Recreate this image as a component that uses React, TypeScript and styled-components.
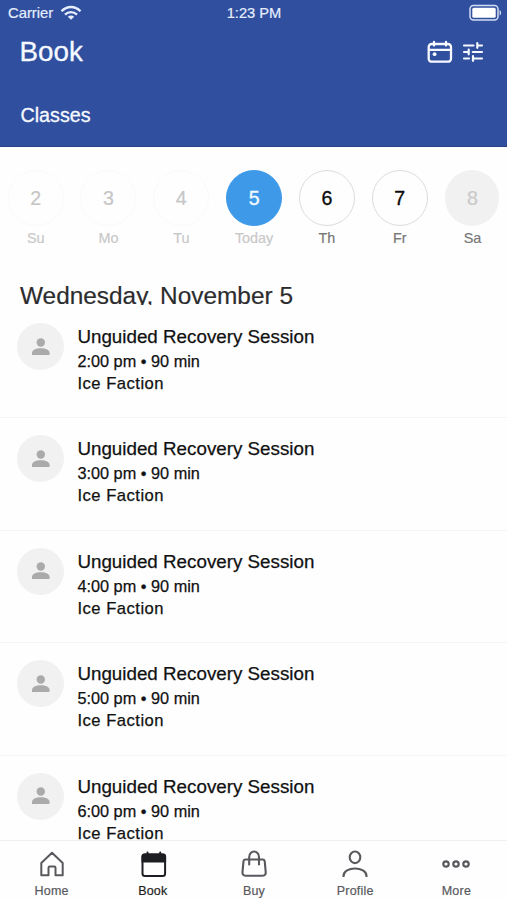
import React from 'react';
import styled, { createGlobalStyle } from 'styled-components';

const GlobalStyle = createGlobalStyle`
  * { box-sizing: border-box; }
  body { margin: 0; background: #fff; }
`;

const Screen = styled.div`
  display: flex;
  flex-direction: column;
  width: 507px;
  height: 900px;
  overflow: hidden;
  background: #fefefe;
  font-family: 'Liberation Sans', Arial, sans-serif;
`;

const Header = styled.header`
  flex: none;
  height: 147px;
  background: #304f9f;
  border-bottom: 1px solid #2c4289;
  color: #f6f9ff;
`;

const StatusBar = styled.div`
  display: grid;
  grid-template-columns: 1fr auto 1fr;
  align-items: center;
  height: 24px;
  padding: 0 5px 0 8px;
  font-size: 14.8px;
  line-height: 24px;
  color: #e6eefd;
  -webkit-text-stroke: 0.2px;
`;

const Carrier = styled.div`
  display: flex;
  align-items: center;
  gap: 7px;
  padding-top: 1px;
`;

const Clock = styled.div`
  font-size: 14.7px;
  line-height: 24px;
  height: 24px;
  margin-right: 2px;
`;

const BatterySlot = styled.div`
  display: flex;
  justify-content: flex-end;
`;

const TitleRow = styled.div`
  display: flex;
  align-items: center;
  justify-content: space-between;
  height: 56px;
  padding: 0 23px 0 19.5px;
`;

const PageTitle = styled.h1`
  margin: 0;
  font-size: 27.8px;
  font-weight: 400;
  line-height: 56px;
  -webkit-text-stroke: 0.3px;
`;

const Actions = styled.div`
  display: flex;
  align-items: center;
  gap: 9px;
`;

const Tab = styled.div`
  padding: 23px 0 0 20.5px;
  font-size: 19.7px;
  line-height: 24px;
  -webkit-text-stroke: 0.3px;
`;

const WeekStrip = styled.div`
  flex: none;
  display: flex;
  gap: 16.8px;
  height: 123px;
  padding: 23px 0 0 7.7px;
`;

const Day = styled.div`
  flex: none;
  display: flex;
  flex-direction: column;
  align-items: center;
  width: 56px;
`;

type DayKind = 'past' | 'today' | 'open' | 'closed';

const circleColors = {
  past: { bg: '#fefefe', line: '#fafafa', text: '#c6c6c6', label: '#c8c8c8' },
  today: { bg: '#3e9ae8', line: '#3e9ae8', text: '#eef8ff', label: '#c8c8c8' },
  open: { bg: '#fefefe', line: '#dcdcdc', text: '#0c0c0c', label: '#777' },
  closed: { bg: '#f1f1f1', line: '#f1f1f1', text: '#cacaca', label: '#777' },
};

const DayCircle = styled.div<{ $kind: DayKind }>`
  width: ${(p) => (p.$kind === 'closed' ? 54 : 56)}px;
  height: 56px;
  border-radius: 50%;
  border: 1px solid ${(p) => circleColors[p.$kind].line};
  background: ${(p) => circleColors[p.$kind].bg};
  color: ${(p) => circleColors[p.$kind].text};
  -webkit-text-stroke: ${(p) => (p.$kind === 'open' || p.$kind === 'today' ? 0.35 : 0.2)}px;
  font-size: 19.6px;
  line-height: 55px;
  text-align: center;
`;

const DayLabel = styled.div<{ $kind: DayKind }>`
  margin-top: 4px;
  font-size: 14.4px;
  line-height: 17px;
  -webkit-text-stroke: 0.2px;
  color: ${(p) => circleColors[p.$kind].label};
`;

const DateHeading = styled.h2`
  flex: none;
  height: 35px;
  margin: 0 0 1px;
  padding: 12px 0 0 20px;
  overflow: hidden;
  font-size: 24.4px;
  font-weight: 400;
  line-height: 28px;
  color: #2c2c2e;
  -webkit-text-stroke: 0.2px;
`;

const SessionList = styled.main`
  flex: 1;
  min-height: 0;
  overflow: hidden;
`;

const SessionRow = styled.article`
  display: flex;
  gap: 14px;
  height: 112.4px;
  padding: 17px 0 0 17px;
  border-bottom: 1px solid #f4f4f4;
`;

const Avatar = styled.div`
  display: flex;
  align-items: center;
  justify-content: center;
  width: 47px;
  height: 47px;
  border-radius: 50%;
  background: #f1f1f1;
`;

const SessionInfo = styled.div`
  margin-left: -0.6px;
  color: #111;
  -webkit-text-stroke: 0.25px;
`;

const SessionName = styled.div`
  padding-top: 3px;
  font-size: 18.8px;
  line-height: 22px;
`;

const SessionTime = styled.div`
  margin-top: 2px;
  font-size: 16.3px;
  line-height: 22px;
`;

const SessionPlace = styled.div`
  font-size: 16.6px;
  line-height: 23px;
  letter-spacing: 0.5px;
`;

const NavBar = styled.nav`
  flex: none;
  display: grid;
  grid-template-columns: repeat(5, 1fr);
  height: 60px;
  padding-left: 1px;
  border-top: 1px solid #f1f1f1;
  background: #fefefe;
`;

const NavItem = styled.div<{ $active: boolean }>`
  display: flex;
  flex-direction: column;
  align-items: center;
  padding-top: 8px;
  color: ${(p) => (p.$active ? '#1d1e22' : '#58595d')};
`;

const NavLabel = styled.div`
  margin-top: 4px;
  font-size: 12.5px;
  line-height: 17px;
  letter-spacing: 0.2px;
  -webkit-text-stroke: 0.2px;
`;

const WifiIcon = () => (
  <svg width="22" height="16" viewBox="0 0 22 16" fill="none" stroke="currentColor" strokeWidth="2.3">
    <path d="M1.5 6.2C7 .6 15 .6 20.500 6.2" />
    <path d="M5 9.600C8.500 6.200 13.500 6.200 17 9.600" />
    <path d="M11 14.800L7.800 11.700C9.600 10.100 12.400 10.100 14.200 11.700Z" fill="currentColor" stroke="none" />
  </svg>
);

const BatteryIcon = () => (
  <svg width="33" height="17" viewBox="0 0 33 17" fill="none">
    <rect x="1" y="1.500" width="28" height="14.500" rx="3.500" stroke="#d3def5" strokeWidth="1.500" />
    <rect x="3.300" y="3.700" width="23.400" height="10.100" rx="1.500" fill="#fff" />
    <path d="M30.600 6c2 .8 2 4.700 0 5.500z" fill="#d3def5" />
  </svg>
);

const ScheduleIcon = () => (
  <svg width="26" height="24" viewBox="0 0 26 24" fill="none" stroke="currentColor" strokeWidth="2.300" strokeLinecap="round">
    <rect x="1.700" y="4" width="22.300" height="17.700" rx="3" />
    <path d="M2 9.800h22M7 2v3.600M19 2v3.600" />
    <circle cx="7.600" cy="14.200" r="1.900" fill="currentColor" stroke="none" />
  </svg>
);

const FilterIcon = () => (
  <svg width="22" height="22" viewBox="0 0 22 22" fill="none" stroke="currentColor" strokeWidth="2.200" strokeLinecap="round">
    <path d="M2 4.500h9.500M15.300 4.500h4.700M15.300 2.200v4.600" />
    <path d="M2 11h4.500M6.700 8.700v4.600M10.800 11H20" />
    <path d="M2 17.500h5M11 17.500h9M11 15.200v4.600" />
  </svg>
);

const PersonIcon = () => (
  <svg width="20" height="20" viewBox="0 0 20 20" fill="#aaa">
    <circle cx="9.800" cy="5.500" r="4.200" />
    <path d="M1 18v-2.100c0-2.800 3.800-4.700 8.800-4.700s8.800 1.900 8.800 4.700V17q0 1-1 1z" />
  </svg>
);

const HomeIcon = () => (
  <svg width="30" height="30" viewBox="0 0 30 30" fill="none" stroke="currentColor" strokeWidth="2" strokeLinejoin="round">
    <path d="M4.300 14L15 3.800l10.700 10.200v12.200h-7.200v-7.400q0-1.200-1.200-1.200h-4.600q-1.200 0-1.200 1.200v7.400H4.300z" />
  </svg>
);

const BookIcon = () => (
  <svg width="30" height="30" viewBox="0 0 30 30" fill="none" stroke="currentColor" strokeWidth="2" strokeLinecap="round">
    <rect x="4.500" y="5.500" width="22.600" height="21.500" rx="2.500" />
    <path d="M4.500 12.500V7.500q0-2 2-2h18.600q2 0 2 2v5zM9.500 3.500v3M22.200 3.500v3" fill="currentColor" />
  </svg>
);

const BagIcon = () => (
  <svg width="30" height="30" viewBox="0 0 30 30" fill="none" stroke="currentColor" strokeWidth="2.100" strokeLinecap="round">
    <path d="M6.500 10.500h17.200q1.700 0 2 1.600l1 10.700q.3 3.900-3 3.900H6.500q-3.300 0-3-3.900l1-10.700q.3-1.600 2-1.600z" />
    <path d="M10.200 15.500V8C10.200.7 20 .7 20 8v7.500" />
  </svg>
);

const ProfileIcon = () => (
  <svg width="30" height="30" viewBox="0 0 30 30" fill="none" stroke="currentColor" strokeWidth="2.100">
    <ellipse cx="15" cy="8.300" rx="5.300" ry="5.800" />
    <path d="M3.500 28v-1c0-10 23-10 23 0v1" />
  </svg>
);

const MoreIcon = () => (
  <svg width="30" height="30" viewBox="0 0 30 30" fill="none" stroke="currentColor" strokeWidth="2.200">
    <circle cx="5" cy="15" r="2.700" />
    <circle cx="15" cy="15" r="2.700" />
    <circle cx="25" cy="15" r="2.700" />
  </svg>
);

const days: { date: number; label: string; kind: DayKind }[] = [
  { date: 2, label: 'Su', kind: 'past' },
  { date: 3, label: 'Mo', kind: 'past' },
  { date: 4, label: 'Tu', kind: 'past' },
  { date: 5, label: 'Today', kind: 'today' },
  { date: 6, label: 'Th', kind: 'open' },
  { date: 7, label: 'Fr', kind: 'open' },
  { date: 8, label: 'Sa', kind: 'closed' },
];

const times = ['2:00 pm', '3:00 pm', '4:00 pm', '5:00 pm', '6:00 pm'];

const navItems = [
  { label: 'Home', Icon: HomeIcon },
  { label: 'Book', Icon: BookIcon },
  { label: 'Buy', Icon: BagIcon },
  { label: 'Profile', Icon: ProfileIcon },
  { label: 'More', Icon: MoreIcon },
];

export default function App() {
  return (
    <>
      <GlobalStyle />
      <Screen>
        <Header>
          <StatusBar>
            <Carrier>Carrier <WifiIcon /></Carrier>
            <Clock>1:23 PM</Clock>
            <BatterySlot><BatteryIcon /></BatterySlot>
          </StatusBar>
          <TitleRow>
            <PageTitle>Book</PageTitle>
            <Actions><ScheduleIcon /><FilterIcon /></Actions>
          </TitleRow>
          <Tab>Classes</Tab>
        </Header>
        <WeekStrip>
          {days.map((d) => (
            <Day key={d.date}>
              <DayCircle $kind={d.kind}>{d.date}</DayCircle>
              <DayLabel $kind={d.kind}>{d.label}</DayLabel>
            </Day>
          ))}
        </WeekStrip>
        <DateHeading>Wednesday, November 5</DateHeading>
        <SessionList>
          {times.map((time) => (
            <SessionRow key={time}>
              <Avatar><PersonIcon /></Avatar>
              <SessionInfo>
                <SessionName>Unguided Recovery Session</SessionName>
                <SessionTime>{time} • 90 min</SessionTime>
                <SessionPlace>Ice Faction</SessionPlace>
              </SessionInfo>
            </SessionRow>
          ))}
        </SessionList>
        <NavBar>
          {navItems.map(({ label, Icon }) => (
            <NavItem key={label} $active={label === 'Book'}>
              <Icon />
              <NavLabel>{label}</NavLabel>
            </NavItem>
          ))}
        </NavBar>
      </Screen>
    </>
  );
}
